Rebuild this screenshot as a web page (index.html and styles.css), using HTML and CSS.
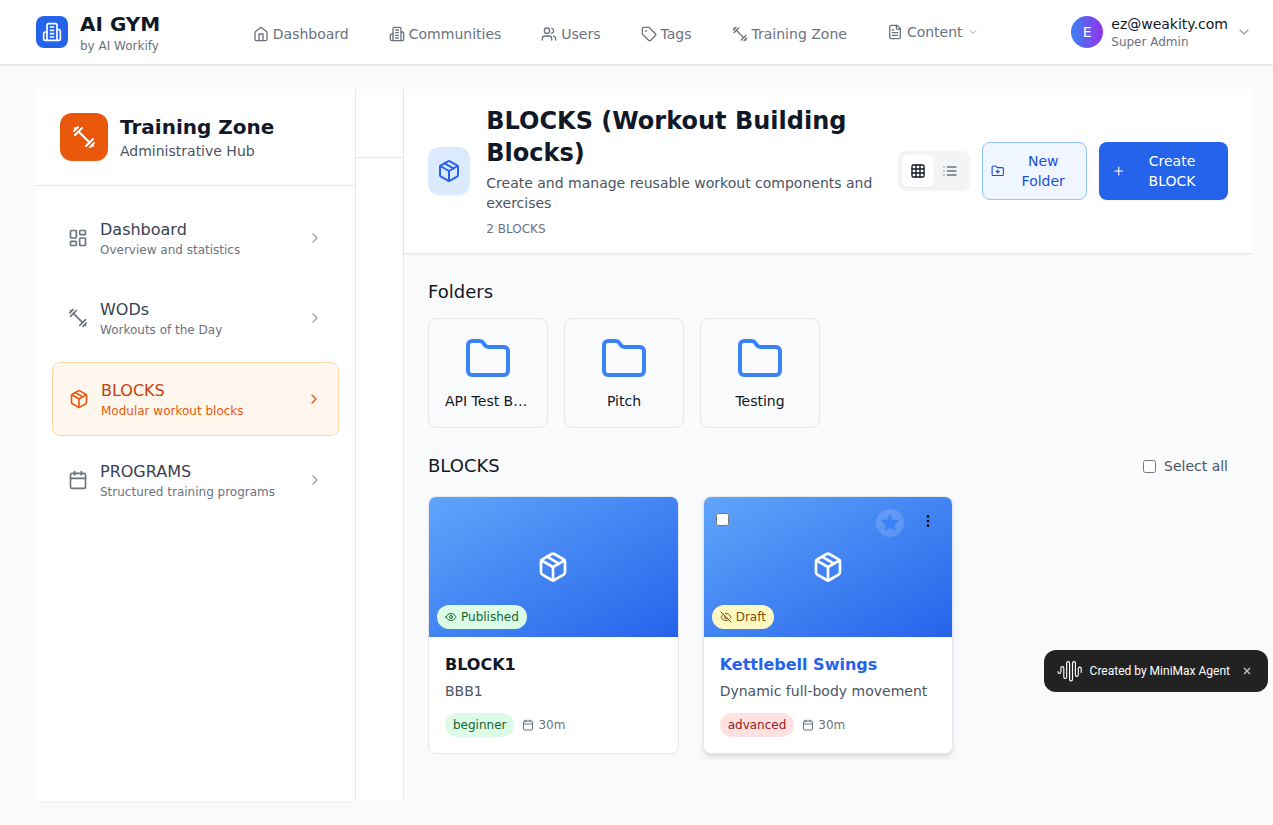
FILE: index.html
```html
<!DOCTYPE html>
<html lang="en">
<head>
<meta charset="utf-8">
<title>AI GYM - Training Zone</title>
<link rel="stylesheet" href="styles.css">
</head>
<body>
<svg class="sprite" aria-hidden="true">
  <symbol id="building" viewBox="0 0 24 24"><path d="M6 22V4a2 2 0 0 1 2-2h8a2 2 0 0 1 2 2v18Z"/><path d="M6 12H4a2 2 0 0 0-2 2v6a2 2 0 0 0 2 2h2"/><path d="M18 9h2a2 2 0 0 1 2 2v9a2 2 0 0 1-2 2h-2"/><path d="M10 6h4M10 10h4M10 14h4M10 18h4"/></symbol>
  <symbol id="home" viewBox="0 0 24 24"><path d="m3 9 9-7 9 7v11a2 2 0 0 1-2 2H5a2 2 0 0 1-2-2z"/><path d="M9 22V12h6v10"/></symbol>
  <symbol id="users" viewBox="0 0 24 24"><path d="M16 21v-2a4 4 0 0 0-4-4H6a4 4 0 0 0-4 4v2"/><circle cx="9" cy="7" r="4"/><path d="M22 21v-2a4 4 0 0 0-3-3.87"/><path d="M16 3.13a4 4 0 0 1 0 7.75"/></symbol>
  <symbol id="tag" viewBox="0 0 24 24"><path d="M12.586 2.586A2 2 0 0 0 11.172 2H4a2 2 0 0 0-2 2v7.172a2 2 0 0 0 .586 1.414l8.704 8.704a2.426 2.426 0 0 0 3.42 0l6.58-6.58a2.426 2.426 0 0 0 0-3.42z"/><circle cx="7.5" cy="7.5" r=".5" fill="currentColor"/></symbol>
  <symbol id="dumbbell" viewBox="0 0 24 24"><path d="m6.5 6.5 11 11"/><path d="m21 21-1-1"/><path d="m3 3 1 1"/><path d="m18 22 4-4"/><path d="m2 6 4-4"/><path d="m3 10 7-7"/><path d="m14 21 7-7"/></symbol>
  <symbol id="file" viewBox="0 0 24 24"><path d="M15 2H6a2 2 0 0 0-2 2v16a2 2 0 0 0 2 2h12a2 2 0 0 0 2-2V7Z"/><path d="M14 2v4a2 2 0 0 0 2 2h4"/><path d="M10 9H8M16 13H8M16 17H8"/></symbol>
  <symbol id="down" viewBox="0 0 24 24"><path d="m6 9 6 6 6-6"/></symbol>
  <symbol id="right" viewBox="0 0 24 24"><path d="m9 18 6-6-6-6"/></symbol>
  <symbol id="dashboard" viewBox="0 0 24 24"><rect width="7" height="9" x="3" y="3" rx="1"/><rect width="7" height="5" x="14" y="3" rx="1"/><rect width="7" height="9" x="14" y="12" rx="1"/><rect width="7" height="5" x="3" y="16" rx="1"/></symbol>
  <symbol id="package" viewBox="0 0 24 24"><path d="m7.5 4.27 9 5.15"/><path d="M21 8a2 2 0 0 0-1-1.73l-7-4a2 2 0 0 0-2 0l-7 4A2 2 0 0 0 3 8v8a2 2 0 0 0 1 1.73l7 4a2 2 0 0 0 2 0l7-4A2 2 0 0 0 21 16Z"/><path d="m3.3 7 8.7 5 8.7-5"/><path d="M12 22V12"/></symbol>
  <symbol id="calendar" viewBox="0 0 24 24"><path d="M8 2v4M16 2v4"/><rect width="18" height="18" x="3" y="4" rx="2"/><path d="M3 10h18"/></symbol>
  <symbol id="grid" viewBox="0 0 24 24"><rect width="18" height="18" x="3" y="3" rx="2"/><path d="M3 9h18M3 15h18M9 3v18M15 3v18"/></symbol>
  <symbol id="list" viewBox="0 0 24 24"><path d="M8 6h13M8 12h13M8 18h13M3 6h.01M3 12h.01M3 18h.01"/></symbol>
  <symbol id="folder" viewBox="0 0 24 24"><path d="M20 20a2 2 0 0 0 2-2V8a2 2 0 0 0-2-2h-7.9a2 2 0 0 1-1.69-.9L9.6 3.9A2 2 0 0 0 7.93 3H4a2 2 0 0 0-2 2v13a2 2 0 0 0 2 2Z"/></symbol>
  <symbol id="folder-plus" viewBox="0 0 24 24"><path d="M12 10v6M9 13h6"/><path d="M20 20a2 2 0 0 0 2-2V8a2 2 0 0 0-2-2h-7.9a2 2 0 0 1-1.69-.9L9.6 3.9A2 2 0 0 0 7.93 3H4a2 2 0 0 0-2 2v13a2 2 0 0 0 2 2Z"/></symbol>
  <symbol id="plus" viewBox="0 0 24 24"><path d="M5 12h14M12 5v14"/></symbol>
  <symbol id="eye" viewBox="0 0 24 24"><path d="M2 12s3-7 10-7 10 7 10 7-3 7-10 7-10-7-10-7Z"/><circle cx="12" cy="12" r="3"/></symbol>
  <symbol id="eye-off" viewBox="0 0 24 24"><path d="M9.88 9.88a3 3 0 1 0 4.24 4.24"/><path d="M10.73 5.08A10.43 10.43 0 0 1 12 5c7 0 10 7 10 7a13.16 13.16 0 0 1-1.67 2.68"/><path d="M6.61 6.61A13.526 13.526 0 0 0 2 12s3 7 10 7a9.74 9.74 0 0 0 5.39-1.61"/><path d="m2 2 20 20"/></symbol>
  <symbol id="star" viewBox="0 0 24 24"><path d="M12 2l3.09 6.26L22 9.27l-5 4.87 1.18 6.88L12 17.77l-6.18 3.25L7 14.14 2 9.27l6.91-1.01z"/></symbol>
  <symbol id="more" viewBox="0 0 24 24"><circle cx="12" cy="12" r="1"/><circle cx="12" cy="5" r="1"/><circle cx="12" cy="19" r="1"/></symbol>
</svg>

<header class="topbar">
  <div class="brand">
    <div class="brand-logo"><svg class="icon s20"><use href="#building"/></svg></div>
    <div>
      <div class="brand-name">AI GYM</div>
      <div class="caption">by AI Workify</div>
    </div>
  </div>
  <nav class="main-nav">
    <a class="nav-link"><svg class="icon s16"><use href="#home"/></svg>Dashboard</a>
    <a class="nav-link"><svg class="icon s16"><use href="#building"/></svg>Communities</a>
    <a class="nav-link"><svg class="icon s16"><use href="#users"/></svg>Users</a>
    <a class="nav-link"><svg class="icon s16"><use href="#tag"/></svg>Tags</a>
    <a class="nav-link"><svg class="icon s16"><use href="#dumbbell"/></svg>Training Zone</a>
    <a class="nav-link nav-menu"><svg class="icon s16"><use href="#file"/></svg>Content<svg class="icon s12"><use href="#down"/></svg></a>
  </nav>
  <div class="user">
    <div class="avatar">E</div>
    <div class="user-text">
      <div class="user-mail">ez@weakity.com</div>
      <div class="caption">Super Admin</div>
    </div>
    <svg class="icon s16 muted"><use href="#down"/></svg>
  </div>
</header>

<main class="shell">
  <aside class="sidebar">
    <div class="sidebar-head">
      <div class="zone-logo"><svg class="icon s24"><use href="#dumbbell"/></svg></div>
      <div>
        <div class="zone-title">Training Zone</div>
        <div class="zone-sub">Administrative Hub</div>
      </div>
    </div>
    <nav class="side-nav">
      <a class="side-item"><svg class="icon s20"><use href="#dashboard"/></svg><span class="side-text"><span class="side-title">Dashboard</span><span class="side-sub">Overview and statistics</span></span><svg class="icon s16 chevron"><use href="#right"/></svg></a>
      <a class="side-item"><svg class="icon s20"><use href="#dumbbell"/></svg><span class="side-text"><span class="side-title">WODs</span><span class="side-sub">Workouts of the Day</span></span><svg class="icon s16 chevron"><use href="#right"/></svg></a>
      <a class="side-item active"><svg class="icon s20"><use href="#package"/></svg><span class="side-text"><span class="side-title">BLOCKS</span><span class="side-sub">Modular workout blocks</span></span><svg class="icon s16 chevron"><use href="#right"/></svg></a>
      <a class="side-item"><svg class="icon s20"><use href="#calendar"/></svg><span class="side-text"><span class="side-title">PROGRAMS</span><span class="side-sub">Structured training programs</span></span><svg class="icon s16 chevron"><use href="#right"/></svg></a>
    </nav>
  </aside>
  <div class="rail"><div class="rail-head"></div></div>
  <section class="content">
    <div class="page-head">
      <div class="page-icon"><svg class="icon s24"><use href="#package"/></svg></div>
      <div class="page-text">
        <h1>BLOCKS (Workout Building Blocks)</h1>
        <p class="page-desc">Create and manage reusable workout components and exercises</p>
        <p class="page-count">2 BLOCKS</p>
      </div>
      <div class="actions">
        <div class="view-toggle">
          <button class="view-btn selected"><svg class="icon s16"><use href="#grid"/></svg></button>
          <button class="view-btn"><svg class="icon s16"><use href="#list"/></svg></button>
        </div>
        <button class="btn btn-folder"><svg class="icon s14"><use href="#folder-plus"/></svg><span>New Folder</span></button>
        <button class="btn btn-create"><svg class="icon s14"><use href="#plus"/></svg><span>Create BLOCK</span></button>
      </div>
    </div>
    <div class="page-body">
      <h2>Folders</h2>
      <div class="folders">
        <div class="folder"><svg class="icon s48"><use href="#folder"/></svg><span>API Test B…</span></div>
        <div class="folder"><svg class="icon s48"><use href="#folder"/></svg><span>Pitch</span></div>
        <div class="folder"><svg class="icon s48"><use href="#folder"/></svg><span>Testing</span></div>
      </div>
      <div class="list-head">
        <h2>BLOCKS</h2>
        <label class="select-all"><input type="checkbox" class="check">Select all</label>
      </div>
      <div class="cards">
        <article class="card">
          <div class="cover">
            <svg class="icon s32"><use href="#package"/></svg>
            <span class="pill green status"><svg class="icon s12"><use href="#eye"/></svg>Published</span>
          </div>
          <div class="card-body">
            <h3>BLOCK1</h3>
            <p>BBB1</p>
            <div class="meta"><span class="pill green">beginner</span><span class="duration"><svg class="icon s12"><use href="#calendar"/></svg>30m</span></div>
          </div>
        </article>
        <article class="card hovered">
          <div class="cover">
            <input type="checkbox" class="check card-check">
            <span class="fav"><svg class="icon s20"><use href="#star"/></svg></span>
            <svg class="icon s16 card-more"><use href="#more"/></svg>
            <svg class="icon s32"><use href="#package"/></svg>
            <span class="pill yellow status"><svg class="icon s12"><use href="#eye-off"/></svg>Draft</span>
          </div>
          <div class="card-body">
            <h3>Kettlebell Swings</h3>
            <p>Dynamic full-body movement</p>
            <div class="meta"><span class="pill red">advanced</span><span class="duration"><svg class="icon s12"><use href="#calendar"/></svg>30m</span></div>
          </div>
        </article>
      </div>
    </div>
  </section>
</main>

<div class="credit">
  <svg class="wave" viewBox="0 0 26 22"><path d="M2 11.500v.5a1.450 1.450 0 0 0 2.900 0V8a1.450 1.450 0 0 1 2.900 0v9a1.450 1.450 0 0 0 2.900 0V3a1.450 1.450 0 0 1 2.900 0v16.500a1.450 1.450 0 0 0 2.900 0V3a1.450 1.450 0 0 1 2.900 0v12a1.450 1.450 0 0 0 2.900 0V8.500a1.450 1.450 0 0 1 2.900 0v4"/></svg>
  <span class="credit-text">Created by MiniMax Agent</span>
  <svg class="close" viewBox="0 0 8 8"><path d="m1 1 6 6M7 1 1 7"/></svg>
</div>
</body>
</html>
```
FILE: styles.css
```css
* { box-sizing: border-box; }
body {
  margin: 0;
  height: 825px;
  overflow: hidden;
  background: #f9fafb;
  color: #111827;
  font: 14px/20px "DejaVu Sans", sans-serif;
}
h1, h2, h3, p { margin: 0; }
button { font: inherit; border: 0; padding: 0; }

.sprite { display: none; }
.icon {
  display: block;
  flex: none;
  fill: none;
  stroke: currentColor;
  stroke-width: 2;
  stroke-linecap: round;
  stroke-linejoin: round;
}
.s12 { width: 12px; height: 12px; }
.s14 { width: 13.5px; height: 16px; }
.s16 { width: 16px; height: 16px; }
.s20 { width: 20px; height: 20px; }
.s24 { width: 24px; height: 24px; }
.s32 { width: 32px; height: 32px; }
.s48 { width: 48px; height: 48px; }
.muted { color: #9ca3af; }
.caption { font-size: 12px; line-height: 16px; color: #6b7280; }

/* Top bar */
.topbar {
  display: flex;
  align-items: center;
  height: 65px;
  padding: 0 21px 0 36px;
  background: #fff;
  border-bottom: 1px solid #e5e7eb;
  box-shadow: 0 1px 2px rgba(0, 0, 0, .05);
}
.brand { display: flex; align-items: center; gap: 12px; width: 216.8px; }
.brand-logo {
  display: flex;
  align-items: center;
  justify-content: center;
  width: 32px;
  height: 32px;
  border-radius: 8px;
  background: #2563eb;
  color: #fff;
}
.brand-name { font-size: 20px; line-height: 28px; font-weight: 700; }
.main-nav { display: flex; gap: 40px; padding-top: 4px; }
.nav-link { display: flex; align-items: center; gap: 4px; color: #6b7280; white-space: nowrap; }
.nav-menu { margin-top: -4px; }
.nav-menu .s12 { color: #9ca3af; }
.user { display: flex; align-items: center; gap: 8px; margin-left: auto; }
.user-text { padding-bottom: 1px; }
.avatar {
  width: 32px;
  height: 32px;
  border-radius: 50%;
  background: linear-gradient(90deg, #3b82f6, #9333ea);
  color: #fff;
  line-height: 32px;
  text-align: center;
}

/* Shell */
.shell {
  display: flex;
  height: 736px;
  padding: 24px 21px 0 36px;
}
.sidebar {
  flex: none;
  width: 320px;
  background: #fff;
  border-right: 1px solid #e5e7eb;
  box-shadow: 0 1px 2px rgba(0, 0, 0, .05);
}
.sidebar-head {
  display: flex;
  gap: 12px;
  padding: 24px;
  border-bottom: 1px solid #e5e7eb;
}
.zone-logo {
  display: flex;
  align-items: center;
  justify-content: center;
  width: 48px;
  height: 48px;
  border-radius: 12px;
  background: #ea580c;
  color: #fff;
}
.zone-title { font-size: 20px; line-height: 28px; font-weight: 700; }
.zone-sub { color: #4b5563; }
.side-nav { display: flex; flex-direction: column; gap: 8px; padding: 16px; }
.side-item {
  display: flex;
  align-items: center;
  gap: 12px;
  padding: 16px;
  border-radius: 8px;
  color: #6b7280;
}
.side-text { flex: 1; }
.side-title { display: block; font-size: 16px; line-height: 24px; color: #374151; }
.side-sub { display: block; font-size: 12px; line-height: 16px; }
.side-item .chevron { color: #9ca3af; }
.side-item.active { background: #fff7ed; border: 1px solid #fed7aa; color: #ea580c; }
.active .side-title { color: #c2410c; }
.side-item.active .chevron { color: #ea580c; }
.rail { flex: none; width: 48px; background: #fff; border-right: 1px solid #e5e7eb; }
.rail-head { height: 69px; border-bottom: 1px solid #e5e7eb; }
.content { flex: 1; min-width: 0; }

/* Page header */
.page-head {
  display: flex;
  align-items: center;
  height: 165px;
  padding: 0 24px;
  background: #fff;
  border-bottom: 1px solid #e5e7eb;
  box-shadow: 0 1px 2px rgba(0, 0, 0, .05);
}
.page-icon {
  display: flex;
  flex: none;
  align-items: center;
  justify-content: center;
  width: 42px;
  height: 48px;
  border-radius: 12px;
  background: #dbeafe;
  color: #2563eb;
  box-shadow: 0 1px 2px rgba(0, 0, 0, .05);
}
.page-text { width: 396px; margin-left: 16.3px; }
h1 { font-size: 24px; line-height: 32px; font-weight: 700; }
.page-desc { margin-top: 4px; color: #4b5563; }
.page-count { margin-top: 8px; font-size: 12px; line-height: 16px; color: #6b7280; }
.actions { display: flex; align-items: center; gap: 12px; margin-left: auto; }
.view-toggle { display: flex; padding: 4px; border-radius: 8px; background: #f3f4f6; }
.view-btn {
  display: flex;
  align-items: center;
  justify-content: center;
  width: 32px;
  height: 32px;
  border-radius: 6px;
  background: none;
  color: #6b7280;
}
.view-btn.selected { background: #fff; color: #111827; box-shadow: 0 1px 2px rgba(0, 0, 0, .05); }
.btn { display: flex; align-items: center; height: 58px; border-radius: 8px; }
.btn span { flex: 1; text-align: center; }
.btn-folder {
  width: 105px;
  padding: 0 11.500px 0 7.500px;
  gap: 8px;
  border: 1px solid #93c5fd;
  background: #eff6ff;
  color: #1d4ed8;
}
.btn-create {
  width: 129px;
  padding: 0 23px 0 12.500px;
  gap: 14px;
  background: #2563eb;
  color: #fff;
  box-shadow: 0 1px 2px rgba(0, 0, 0, .05);
}

/* Page body */
.page-body { padding: 24px; }
h2 { font-size: 18px; line-height: 28px; font-weight: 400; }
.folders { display: flex; gap: 16px; margin-top: 12px; }
.folder {
  display: flex;
  flex-direction: column;
  align-items: center;
  gap: 8px;
  width: 120px;
  padding: 16px;
  border: 1px solid #e5e7eb;
  border-radius: 8px;
}
.folder .icon { color: #3b82f6; }
.folder span { min-width: 86px; text-align: center; white-space: nowrap; }
.folder:first-child span { text-align: left; }
.list-head { display: flex; align-items: center; justify-content: space-between; margin-top: 24px; }
.select-all { display: flex; align-items: center; gap: 8px; color: #4b5563; }
.check { width: 13px; height: 13px; margin: 0; }
.cards { display: grid; grid-template-columns: repeat(3, 1fr); gap: 24px; margin-top: 16px; }
.card { overflow: hidden; border: 1px solid #e5e7eb; border-radius: 8px; background: #fff; }
.card.hovered { box-shadow: 0 4px 6px -1px rgba(0, 0, 0, .1), 0 2px 4px -2px rgba(0, 0, 0, .1); }
.cover {
  position: relative;
  display: flex;
  align-items: center;
  justify-content: center;
  height: 140px;
  background: linear-gradient(to bottom right, #60a5fa, #2563eb);
  color: #fff;
}
.pill {
  display: flex;
  align-items: center;
  gap: 4px;
  padding: 4px 8px;
  border-radius: 12px;
  font-size: 12px;
  line-height: 16px;
}
.green { background: #dcfce7; color: #166534; }
.yellow { background: #fef9c3; color: #854d0e; }
.red { background: #fee2e2; color: #991b1b; }
.status { position: absolute; left: 8px; bottom: 8px; }
.card-check { position: absolute; left: 12px; top: 16px; }
.fav {
  position: absolute;
  right: 48px;
  top: 12px;
  padding: 4px;
  border-radius: 50%;
  background: rgba(255, 255, 255, .15);
  color: #3b82f6;
}
.fav .icon { fill: currentColor; stroke-width: 1; }
.card-more { position: absolute; right: 16px; top: 16px; color: #000; }
.card-body { padding: 16px; }
h3 { font-size: 16px; line-height: 24px; font-weight: 700; }
.hovered h3 { color: #2563eb; }
.card-body p { margin-top: 4px; color: #4b5563; white-space: nowrap; }
.meta { display: flex; align-items: center; gap: 8px; margin-top: 12px; }
.duration { display: flex; align-items: center; gap: 4px; font-size: 12px; line-height: 16px; color: #6b7280; }

/* Floating credit */
.credit {
  position: fixed;
  right: 5px;
  bottom: 133px;
  display: flex;
  align-items: center;
  width: 224px;
  height: 42px;
  padding: 0 17px 0 12px;
  border-radius: 12px;
  background: #222;
  color: #fff;
  font: 400 12px/16px Roboto, sans-serif;
}
.wave { width: 26px; height: 22px; fill: none; stroke: #fff; stroke-width: 1.15; stroke-linecap: round; }
.credit-text { margin-left: 7.6px; white-space: nowrap; }
.close { width: 8px; height: 8px; margin-left: auto; fill: none; stroke: #c8c8c8; stroke-width: 1.3; }
```
